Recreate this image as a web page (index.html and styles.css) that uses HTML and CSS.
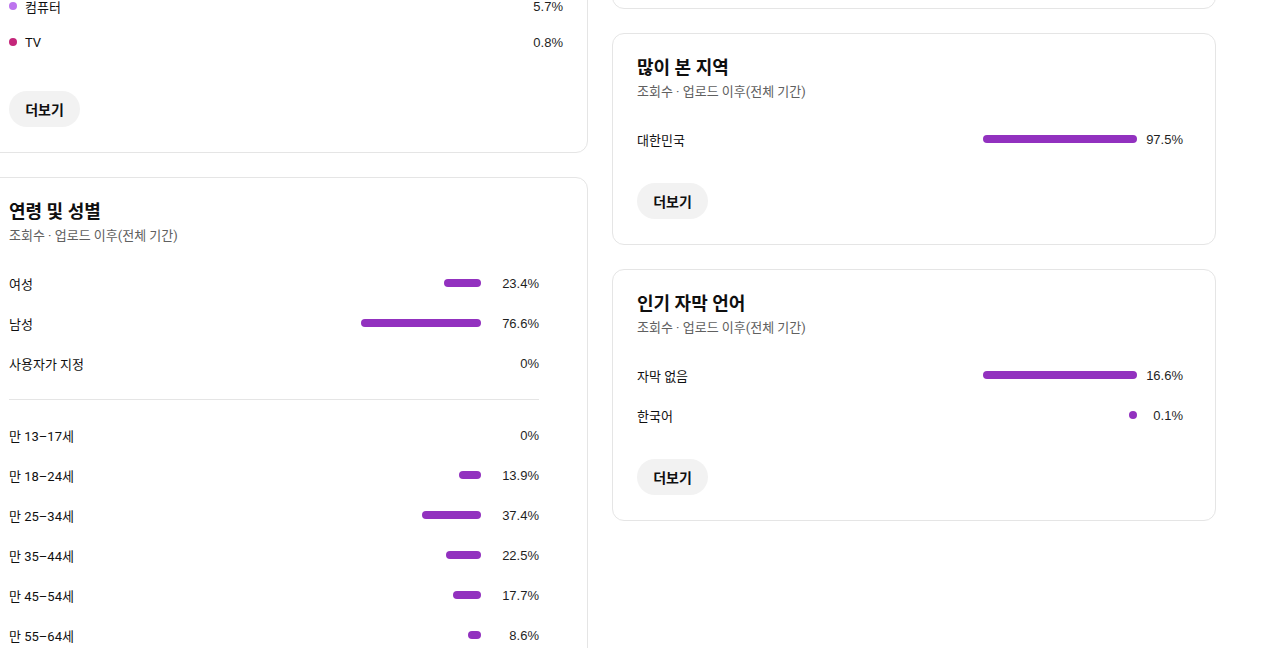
FILE: index.html
```html
<!DOCTYPE html>
<html lang="ko">
<head>
<meta charset="utf-8">
<title>시청자 분석</title>
<link rel="stylesheet" href="styles.css">
</head>
<body>
<div class="page">
  <div class="col">
    <section class="card">
      <h2 class="card-title">기기 유형</h2>
      <p class="card-sub">조회수 · 업로드 이후(전체 기간)</p>
      <div class="stack">
        <span class="seg seg-mobile" style="width:80%"></span>
        <span class="seg seg-tablet" style="width:13.5%"></span>
        <span class="seg seg-pc" style="width:5.7%"></span>
        <span class="seg seg-tv" style="width:0.8%"></span>
      </div>
      <ul class="legend">
        <li class="legend-row"><span class="dot dot-mobile"></span><span class="label">휴대전화</span><span class="pct">80.0%</span></li>
        <li class="legend-row"><span class="dot dot-tablet"></span><span class="label">태블릿</span><span class="pct">13.5%</span></li>
        <li class="legend-row"><span class="dot dot-pc"></span><span class="label">컴퓨터</span><span class="pct">5.7%</span></li>
        <li class="legend-row"><span class="dot dot-tv"></span><span class="label">TV</span><span class="pct">0.8%</span></li>
      </ul>
      <button class="more more-legend">더보기</button>
    </section>

    <section class="card">
      <h2 class="card-title">연령 및 성별</h2>
      <p class="card-sub">조회수 · 업로드 이후(전체 기간)</p>
      <ul class="list list-narrow">
        <li class="row"><span class="label">여성</span><span class="track track-sm"><span class="bar" style="width:37px"></span></span><span class="pct pct-wide">23.4%</span></li>
        <li class="row"><span class="label">남성</span><span class="track track-sm"><span class="bar" style="width:120px"></span></span><span class="pct pct-wide">76.6%</span></li>
        <li class="row"><span class="label">사용자가 지정</span><span class="track track-sm"></span><span class="pct pct-wide">0%</span></li>
      </ul>
      <hr class="divider">
      <ul class="list list-narrow list-flush">
        <li class="row"><span class="label">만 13–17세</span><span class="track track-sm"></span><span class="pct pct-wide">0%</span></li>
        <li class="row"><span class="label">만 18–24세</span><span class="track track-sm"><span class="bar" style="width:22px"></span></span><span class="pct pct-wide">13.9%</span></li>
        <li class="row"><span class="label">만 25–34세</span><span class="track track-sm"><span class="bar" style="width:59px"></span></span><span class="pct pct-wide">37.4%</span></li>
        <li class="row"><span class="label">만 35–44세</span><span class="track track-sm"><span class="bar" style="width:35px"></span></span><span class="pct pct-wide">22.5%</span></li>
        <li class="row"><span class="label">만 45–54세</span><span class="track track-sm"><span class="bar" style="width:28px"></span></span><span class="pct pct-wide">17.7%</span></li>
        <li class="row"><span class="label">만 55–64세</span><span class="track track-sm"><span class="bar" style="width:13px"></span></span><span class="pct pct-wide">8.6%</span></li>
        <li class="row"><span class="label">만 65세 이상</span><span class="track track-sm"></span><span class="pct pct-wide">0%</span></li>
      </ul>
    </section>
  </div>

  <div class="col">
    <section class="card">
      <h2 class="card-title">구독자 시청 시간</h2>
      <p class="card-sub">시청 시간 · 업로드 이후(전체 기간)</p>
      <ul class="list list-right">
        <li class="row"><span class="label">구독 안함</span><span class="track track-lg"><span class="bar" style="width:154px"></span></span><span class="pct pct-narrow">92.1%</span></li>
        <li class="row"><span class="label">구독중</span><span class="track track-lg"><span class="bar" style="width:13px"></span></span><span class="pct pct-narrow">7.9%</span></li>
      </ul>
      <button class="more">더보기</button>
    </section>

    <section class="card">
      <h2 class="card-title">많이 본 지역</h2>
      <p class="card-sub">조회수 · 업로드 이후(전체 기간)</p>
      <ul class="list list-right">
        <li class="row"><span class="label">대한민국</span><span class="track track-lg"><span class="bar" style="width:154px"></span></span><span class="pct pct-narrow">97.5%</span></li>
      </ul>
      <button class="more">더보기</button>
    </section>

    <section class="card">
      <h2 class="card-title">인기 자막 언어</h2>
      <p class="card-sub">조회수 · 업로드 이후(전체 기간)</p>
      <ul class="list list-right">
        <li class="row"><span class="label">자막 없음</span><span class="track track-lg"><span class="bar" style="width:154px"></span></span><span class="pct pct-narrow">16.6%</span></li>
        <li class="row"><span class="label">한국어</span><span class="track track-lg"><span class="bar" style="width:8px"></span></span><span class="pct pct-narrow">0.1%</span></li>
      </ul>
      <button class="more">더보기</button>
    </section>
  </div>
</div>
</body>
</html>
```

FILE: styles.css
```css
* { box-sizing: border-box; }

html, body {
  margin: 0;
  padding: 0;
  background: #ffffff;
}

body {
  font-family: Roboto, "Noto Sans CJK KR", sans-serif;
  color: #0f0f0f;
  font-size: 13px;
  overflow: hidden;
}

.page {
  display: grid;
  grid-template-columns: 604px 604px;
  column-gap: 24px;
  align-items: start;
  margin-left: -16px;
  margin-top: -243px;
}

.col {
  display: flex;
  flex-direction: column;
  gap: 24px;
}

.card {
  border: 1px solid #e5e5e5;
  border-radius: 12px;
  padding: 20px 24px 25px;
  background: #fff;
}

.card-title {
  margin: 0;
  font-size: 18px;
  line-height: 27px;
  font-weight: 700;
  font-family: Roboto, "Noto Sans CJK KR", sans-serif;
  color: #0f0f0f;
}

.card-sub {
  margin: 0;
  font-size: 13px;
  line-height: 21px;
  color: #606060;
}

.list {
  list-style: none;
  margin: 17px 0 0;
  padding: 0;
}

.list-flush { margin-top: 0; }
.list-narrow { margin-right: 24px; }
.list-right { margin-right: 8px; }

.row {
  display: flex;
  align-items: center;
  height: 40px;
}

.label {
  flex: 1;
  min-width: 0;
  white-space: nowrap;
}

.track {
  display: flex;
  justify-content: flex-end;
  align-items: center;
  height: 8px;
}

.track-sm { width: 140px; }
.track-lg { width: 154px; }

.bar {
  display: block;
  height: 8px;
  border-radius: 4px;
  background: #9231bf;
}

.pct {
  text-align: right;
  font-family: "Liberation Sans", Arial, sans-serif;
  font-size: 13px;
  color: #1f1f1f;
  white-space: nowrap;
}

.pct-wide { width: 58px; }
.pct-narrow { width: 46px; }

.divider {
  border: 0;
  border-top: 1px solid #e5e5e5;
  margin: 16px 24px 15px 0;
  height: 0;
}

.more {
  display: block;
  margin-top: 24px;
  height: 36px;
  width: 71px;
  padding: 0;
  border: 0;
  border-radius: 18px;
  background: #f2f2f2;
  font-family: Roboto, "Noto Sans CJK KR", sans-serif;
  font-size: 14px;
  font-weight: 700;
  color: #0f0f0f;
  cursor: pointer;
}

.more-legend {
  margin-top: 31px;
  margin-bottom: 0;
}

.stack {
  display: flex;
  gap: 2px;
  height: 8px;
  margin: 17px 0 65px;
}

.seg { display: block; height: 8px; border-radius: 4px; }
.seg-mobile { background: #5b2c90; }
.seg-tablet { background: #8c3fd6; }
.seg-pc { background: #bd74ee; }
.seg-tv { background: #c4267a; }

.legend {
  list-style: none;
  margin: 0;
  padding: 0;
}

.legend-row {
  display: flex;
  align-items: center;
  height: 36px;
}

.dot {
  width: 8px;
  height: 8px;
  border-radius: 50%;
  margin-right: 8px;
  flex: none;
}

.dot-mobile { background: #5b2c90; }
.dot-tablet { background: #8c3fd6; }
.dot-pc { background: #bd74ee; }
.dot-tv { background: #c4267a; }
```
